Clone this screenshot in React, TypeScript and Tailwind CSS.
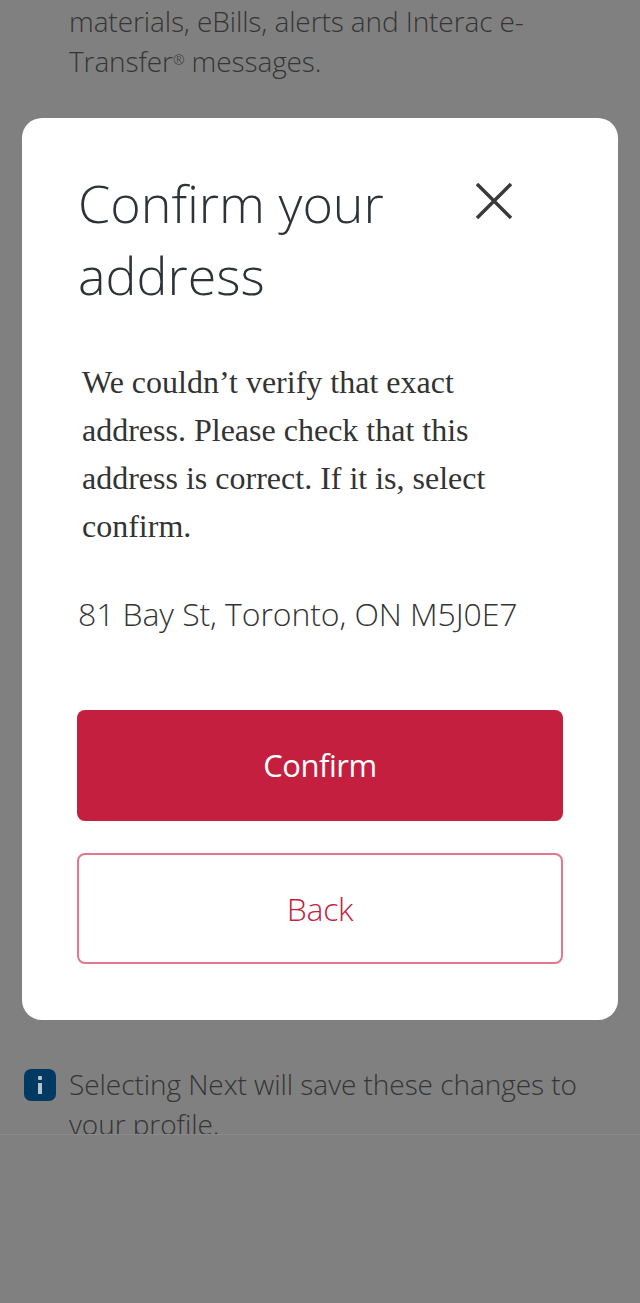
const sans = 'font-["Open_Sans","Noto_Sans",sans-serif]';

function InfoIcon() {
  return (
    <div className="w-[32px] h-[32px] mt-[3px] shrink-0 rounded-[7px] bg-[#003a63] flex flex-col items-center justify-center gap-[3px]">
      <span className="w-[4px] h-[4px] rounded-[1px] bg-[#b9c3ca]" />
      <span className="w-[4px] h-[11px] bg-[#b9c3ca]" />
    </div>
  );
}

export default function App() {
  return (
    <div className={`w-[640px] h-[1303px] overflow-hidden bg-[#808080] flex flex-col ${sans}`}>
      <div className="h-[1135px] overflow-hidden border-b border-[#8a8a8a]">
        <p className="pl-[69px] pr-[80px] text-[28px] leading-[40px] tracking-[-0.1px] font-light text-[#353535] h-[118px] pt-[1px]">
          materials, eBills, alerts and Interac e-
          <br />
          Transfer<sup className="text-[14px]">®</sup> messages.
        </p>

        <div className="mx-[22px] w-[596px] h-[902px] bg-white rounded-[20px] px-[55px] pt-[49px]">
          <div className="flex items-start justify-between">
            <h2 className="ml-[1px] text-[52px] leading-[72px] font-light text-[#2e3338]">
              Confirm your
              <br />
              address
            </h2>
            <button className="mt-[15px] mr-[50px] text-[#3a3a3a]">
              <svg width="38" height="38" viewBox="0 0 38 38" fill="none" stroke="currentColor" strokeWidth="3.5">
                <path d="M2 2 L36 36 M36 2 L2 36" />
              </svg>
            </button>
          </div>

          <p className="mt-[47px] ml-[5px] w-[420px] font-['Liberation_Serif',serif] text-[32px] leading-[48px] text-[#333333]">
            We couldn’t verify that exact address. Please check that this address is correct. If it is, select confirm.
          </p>

          <p className="mt-[40px] ml-[1px] text-[32px] leading-[48px] font-light tracking-[-0.1px] text-[#353535]">
            81 Bay St, Toronto, ON M5J0E7
          </p>

          <button className="mt-[72px] w-full h-[111px] rounded-[8px] bg-[#c41f3e] text-white text-[31px] tracking-[-0.5px]">
            Confirm
          </button>
          <button className="mt-[32px] w-full h-[111px] rounded-[8px] border-2 border-[#e5778c] bg-white text-[#c41f3e] text-[32px] font-light tracking-[-0.3px]">
            Back
          </button>
        </div>

        <div className="mt-[46px] pl-[24px] pr-[50px] flex gap-[13px]">
          <InfoIcon />
          <p className="text-[28px] leading-[40px] tracking-[-0.05px] font-light text-[#353535] mt-[-2px]">
            Selecting Next will save these changes to your profile.
          </p>
        </div>
      </div>
    </div>
  );
}
